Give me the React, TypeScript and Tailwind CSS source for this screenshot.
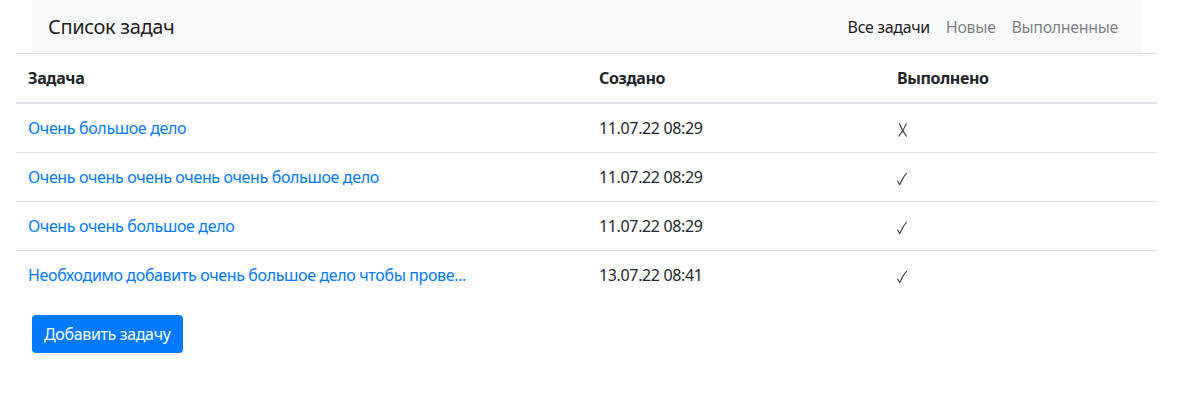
const tasks = [
  { title: "Очень большое дело", created: "11.07.22 08:29", done: false },
  { title: "Очень очень очень очень очень большое дело", created: "11.07.22 08:29", done: true },
  { title: "Очень очень большое дело", created: "11.07.22 08:29", done: true },
  { title: "Необходимо добавить очень большое дело чтобы прове...", created: "13.07.22 08:41", done: true },
];

function Mark({ done }: { done: boolean }) {
  return done ? (
    <svg width="12" height="14" viewBox="0 0 12 14" className="ml-[-1px] inline-block align-middle" fill="none" stroke="#3a3a3a" strokeWidth="1.1" strokeLinecap="round" strokeLinejoin="round">
      <path d="M1.5 9 L3.8 12.6 C5.5 8.5 7.5 4.5 10.5 1.3" />
    </svg>
  ) : (
    <svg width="12" height="14" viewBox="0 0 12 14" className="inline-block align-middle" fill="none" stroke="#3a3a3a" strokeWidth="1.1" strokeLinecap="round">
      <path d="M2.5 0.8 C4 5 6.5 9.5 9.5 13.2" />
      <path d="M9.3 0.8 C7.5 5 5 9.5 1.8 13.2" />
    </svg>
  );
}

export default function App() {
  return (
    <div className="min-h-[416px] bg-white text-[#212529] font-['Noto_Sans','Open_Sans',sans-serif] text-[16px] leading-6 tracking-[-0.022em]">
      <nav className="mx-[32px] w-[1110px] h-[53px] bg-[#f8f9fa] flex items-center justify-between px-4">
        <span className="text-[20px] text-black/90">Список задач</span>
        <div className="flex">
          <a className="px-2 text-black/90">Все задачи</a>
          <a className="px-2 text-black/50">Новые</a>
          <a className="px-2 text-black/50">Выполненные</a>
        </div>
      </nav>
      <table className="ml-[16px] w-[1141px] border-collapse text-left">
        <thead>
          <tr className="border-t border-[#dee2e6] border-b-2">
            <th className="w-[571px] px-3 py-3 font-bold">Задача</th>
            <th className="w-[298px] px-3 py-3 font-bold">Создано</th>
            <th className="px-3 py-3 font-bold">Выполнено</th>
          </tr>
        </thead>
        <tbody>
          {tasks.map((t, i) => (
            <tr key={i} className={i > 0 ? "border-t border-[#dee2e6]" : ""}>
              <td className="px-3 py-3 text-[#007bff]">{t.title}</td>
              <td className="px-3 py-3">{t.created}</td>
              <td className="px-3 py-3">
                <Mark done={t.done} />
              </td>
            </tr>
          ))}
        </tbody>
      </table>
      <button className="ml-[32px] mt-[16px] h-[38px] px-3 rounded bg-[#007bff] text-white">
        Добавить задачу
      </button>
    </div>
  );
}
